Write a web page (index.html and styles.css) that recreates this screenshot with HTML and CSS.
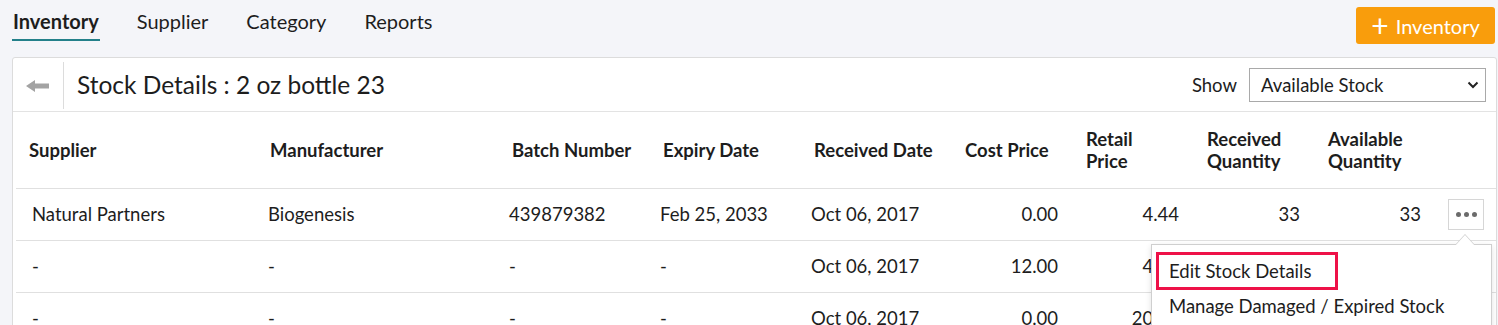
FILE: index.html
```html
<!DOCTYPE html>
<html lang="en">
<head>
    <meta charset="UTF-8">
    <meta name="viewport" content="width=device-width, initial-scale=1.0">
    <title>Stock Details</title>
    <link rel="stylesheet" href="styles.css">
</head>
<body>
    <div class="topbar">
        <nav class="tabs">
            <a class="tab active" href="#">Inventory</a>
            <a class="tab" href="#">Supplier</a>
            <a class="tab" href="#">Category</a>
            <a class="tab" href="#">Reports</a>
        </nav>
        <button class="add-btn"><span class="plus">+</span> Inventory</button>
    </div>

    <div class="card">
        <div class="card-head">
            <div class="back">
                <svg width="24" height="12" viewBox="0 0 24 12"><path d="M0 6 L9 0 L9 3.5 L23 3.5 L23 8.5 L9 8.5 L9 12 Z" fill="#a3a3a3"/></svg>
            </div>
            <h2 class="title">Stock Details : 2 oz bottle 23</h2>
            <div class="show">
                <label for="show">Show</label>
                <div class="select">
                    <span>Available Stock</span>
                    <svg width="12" height="8" viewBox="0 0 12 8"><path d="M1.5 1.5 L6 6 L10.5 1.5" fill="none" stroke="#222" stroke-width="2"/></svg>
                </div>
            </div>
        </div>

        <table class="stock">
            <thead>
                <tr>
                    <th class="c-sup">Supplier</th>
                    <th class="c-man">Manufacturer</th>
                    <th class="c-batch">Batch Number</th>
                    <th class="c-exp">Expiry Date</th>
                    <th class="c-rec">Received Date</th>
                    <th class="c-num">Cost Price</th>
                    <th class="c-num">Retail<br>Price</th>
                    <th class="c-num">Received<br>Quantity</th>
                    <th class="c-num">Available<br>Quantity</th>
                    <th class="c-act"></th>
                </tr>
            </thead>
            <tbody>
                <tr>
                    <td class="first">Natural Partners</td>
                    <td>Biogenesis</td>
                    <td>439879382</td>
                    <td>Feb 25, 2033</td>
                    <td>Oct 06, 2017</td>
                    <td class="num">0.00</td>
                    <td class="num">4.44</td>
                    <td class="num">33</td>
                    <td class="num">33</td>
                    <td class="act">
                        <div class="more-wrap">
                            <button class="more"><i></i><i></i><i></i></button>
                            <ul class="menu">
                                <li><span class="marked">Edit Stock Details</span></li>
                                <li>Manage Damaged / Expired Stock</li>
                            </ul>
                        </div>
                    </td>
                </tr>
                <tr>
                    <td class="first">-</td>
                    <td>-</td>
                    <td>-</td>
                    <td>-</td>
                    <td>Oct 06, 2017</td>
                    <td class="num">12.00</td>
                    <td class="num">4.44</td>
                    <td class="num">12</td>
                    <td class="num">12</td>
                    <td class="act"></td>
                </tr>
                <tr>
                    <td class="first">-</td>
                    <td>-</td>
                    <td>-</td>
                    <td>-</td>
                    <td>Oct 06, 2017</td>
                    <td class="num">0.00</td>
                    <td class="num">20.00</td>
                    <td class="num">20</td>
                    <td class="num">20</td>
                    <td class="act"></td>
                </tr>
            </tbody>
        </table>
    </div>
</body>
</html>
```

FILE: styles.css
```css
html {
    overflow: hidden;
}
body {
    font-family: Lato, "Open Sans", sans-serif;
    margin: 0;
    padding: 0 1px 0 12px;
    background-color: #f4f5f9;
    color: #1d1d1d;
}
.topbar {
    display: flex;
    justify-content: space-between;
    align-items: flex-start;
    height: 57px;
}
.tabs {
    display: flex;
    gap: 36px;
    padding-top: 9px;
}
.tab {
    font-size: 20px;
    color: #1d1d1d;
    text-decoration: none;
    padding: 0 1px 6px;
    border-bottom: 2px solid transparent;
}
.tab.active {
    font-weight: bold;
    border-bottom-color: #23808a;
}
.add-btn {
    margin: 7px 2px 0 0;
    height: 37px;
    width: 139px;
    background-color: #f99d0c;
    color: #fff;
    border: none;
    border-radius: 3px;
    font-family: inherit;
    font-size: 20px;
    cursor: pointer;
}
.add-btn .plus {
    font-size: 30px;
    line-height: 18px;
    vertical-align: -3px;
    margin-right: 2px;
}
.card {
    background-color: #fff;
    border: 1px solid #dcdcdc;
    border-radius: 3px;
    height: 300px;
}
.card-head {
    display: flex;
    align-items: center;
    height: 53px;
    border-bottom: 1px solid #e3e3e3;
}
.back {
    width: 50px;
    height: 47px;
    margin-top: 2px;
    display: flex;
    align-items: center;
    justify-content: center;
    border-right: 1px solid #dcdcdc;
}
.title {
    flex: 1;
    margin: 0;
    padding-left: 13px;
    font-size: 24.5px;
    font-weight: normal;
}
.show {
    display: flex;
    align-items: center;
    gap: 12px;
    margin-right: 10px;
}
.show label {
    font-size: 18.5px;
}
.select {
    width: 237px;
    height: 34px;
    box-sizing: border-box;
    border: 1px solid #a9a9a9;
    display: flex;
    align-items: center;
    justify-content: space-between;
    padding: 0 6px 0 11px;
    font-size: 18.5px;
}
.stock {
    width: calc(100% - 3px);
    margin-left: 3px;
    border-collapse: collapse;
    table-layout: fixed;
    font-size: 18.5px;
}
.stock th {
    box-sizing: border-box;
    height: 76px;
    text-align: left;
    font-weight: bold;
    padding: 0 0 0 15px;
    line-height: 22px;
    border-bottom: 1px solid #e0e0e0;
}
.stock th.c-sup { width: 240px; padding-left: 13px; }
.stock th.c-man { width: 241px; padding-left: 14px; }
.stock th.c-batch { width: 151px; }
.stock th.c-exp { width: 151px; }
.stock th.c-rec { width: 151px; }
.stock th.c-num { width: 121px; }
.stock th.c-act { width: auto; }
.stock td {
    height: 51px;
    padding: 0 0 0 12px;
    border-bottom: 1px solid #e0e0e0;
    white-space: nowrap;
}
.stock td.first {
    padding-left: 16px;
}
.stock td.num {
    text-align: right;
    padding: 0 13px 0 0;
}
.stock td.act {
    padding: 0 0 0 14px;
}
.more-wrap {
    position: relative;
    width: 36px;
}
.more {
    width: 36px;
    height: 31px;
    background: #fff;
    border: 1px solid #d6d6d6;
    display: flex;
    align-items: center;
    justify-content: center;
    gap: 3px;
    padding: 0;
    cursor: pointer;
}
.more i {
    width: 5px;
    height: 5px;
    border-radius: 50%;
    background-color: #6b6b6b;
}
.menu {
    position: absolute;
    top: 45px;
    right: -8px;
    width: 339px;
    margin: 0;
    padding: 7px 0 10px;
    list-style: none;
    background: #fff;
    border: 1px solid #cfcfcf;
    box-shadow: 0 2px 6px rgba(0, 0, 0, 0.12);
    z-index: 2;
}
.menu::before,
.menu::after {
    content: "";
    position: absolute;
    right: 16px;
    border: 10px solid transparent;
    border-top: none;
}
.menu::before {
    top: -11px;
    border-bottom: 11px solid #cfcfcf;
}
.menu::after {
    top: -10px;
    border-bottom: 11px solid #fff;
}
.menu li {
    height: 32px;
    line-height: 32px;
    padding-left: 17px;
    font-size: 18.5px;
}
.menu li:first-child {
    padding-left: 4px;
    height: 38px;
    line-height: 32px;
}
.menu .marked {
    display: inline-block;
    width: 182px;
    box-sizing: border-box;
    border: 3px solid #ee1148;
    padding-left: 10px;
}
```
